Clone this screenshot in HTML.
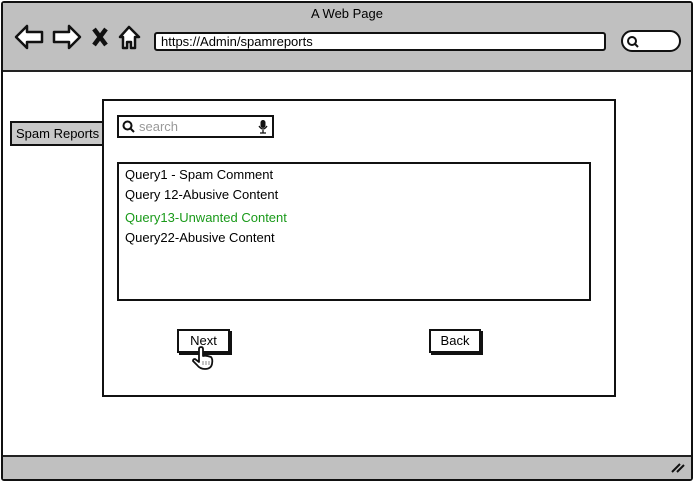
<!DOCTYPE html>
<html><head><style>
*{margin:0;padding:0;box-sizing:border-box}
body{width:694px;height:482px;background:#fff;font-family:"Liberation Sans",sans-serif;position:relative;overflow:hidden}
.a{position:absolute}
.b{border:2px solid #111}
</style></head><body>
<div class="a b" style="left:1px;top:1px;width:692px;height:480px;border-radius:3px"></div>
<div class="a" style="left:3px;top:3px;width:688px;height:69px;background:#c0c0c0;border-bottom:2px solid #222"></div>
<div class="a" style="left:0;top:6px;width:694px;text-align:center;font-size:13px">A Web Page</div>
<svg class="a" style="left:14px;top:22px" width="130" height="30" viewBox="0 0 130 30" fill="#fff" stroke="#111" stroke-width="2.5" stroke-linejoin="round">
<path d="M2 15 L13 4 L13 10 L28 10 L28 20 L13 20 L13 26 Z"/>
<path d="M66 15 L55 4 L55 10 L40 10 L40 20 L55 20 L55 26 Z"/>
<path d="M80 7 L92 23 M92 7 L80 23" stroke-width="4.5"/>
<path d="M106 15 L115 5 L125 15 L121 15 L121 26 L117 26 L117 20 L113 20 L113 26 L109 26 L109 15 Z"/>
</svg>
<div class="a b" style="left:154px;top:32px;width:452px;height:19px;background:#fff;border-radius:3px;font-size:13px;padding-left:5px;line-height:15px">https://Admin/spamreports</div>
<div class="a b" style="left:621px;top:30px;width:60px;height:22px;background:#fff;border-radius:11px"></div>
<svg class="a" style="left:626px;top:35px" width="14" height="14"><circle cx="6" cy="6" r="4" fill="none" stroke="#111" stroke-width="2"/><path d="M9 9 L12 12" stroke="#111" stroke-width="2"/></svg>
<div class="a" style="left:3px;top:455px;width:688px;height:24px;background:#c0c0c0;border-top:2px solid #222"></div>
<svg class="a" style="left:670px;top:460px" width="16" height="14"><path d="M2 12 L10 4 M7 12 L14 5" stroke="#111" stroke-width="2"/></svg>
<div class="a b" style="left:10px;top:121px;width:94px;height:25px;background:#c8c8c8;font-size:13px;padding:3px 0 0 4px">Spam Reports</div>
<div class="a b" style="left:102px;top:99px;width:514px;height:298px;background:#fff"></div>
<div class="a b" style="left:117px;top:115px;width:157px;height:23px;background:#fff;font-size:13px;color:#999;padding:2px 0 0 20px">search</div>
<svg class="a" style="left:122px;top:120px" width="14" height="14"><circle cx="5.5" cy="5.5" r="4" fill="none" stroke="#111" stroke-width="2"/><path d="M8.5 8.5 L12 12" stroke="#111" stroke-width="2"/></svg>
<svg class="a" style="left:258px;top:119px" width="10" height="15"><rect x="2.5" y="1" width="5" height="8" rx="2.5" fill="#111"/><path d="M1 7 Q5 13 9 7 M5 11 V14 M2 14 H8" stroke="#111" fill="none" stroke-width="1.3"/></svg>
<div class="a b" style="left:117px;top:162px;width:474px;height:139px;background:#fff;font-size:13px;padding:1px 0 0 6px;line-height:20px">
<div>Query1 - Spam Comment</div><div>Query 12-Abusive Content</div><div style="color:#1a9a1a;margin-top:3px">Query13-Unwanted Content</div><div>Query22-Abusive Content</div></div>
<div class="a b" style="left:177px;top:329px;width:53px;height:24px;background:#fff;font-size:13px;text-align:center;line-height:20px;box-shadow:2px 2px 0 #111">Next</div>
<div class="a b" style="left:429px;top:329px;width:52px;height:24px;background:#fff;font-size:13px;text-align:center;line-height:20px;box-shadow:2px 2px 0 #111">Back</div>
<svg class="a" style="left:191px;top:346px" width="24" height="26" viewBox="0 0 24 26"><path d="M8 3 Q8 1 10 1 Q12 1 12 3 L12 10 Q15 9 20 11 Q22 13 21 18 Q20 23 14 23 Q9 23 6 19 L2 15 Q2 13 4 13 L8 16 Z" fill="#fff" stroke="#111" stroke-width="1.8" stroke-linejoin="round"/><path d="M12 15 V19 M15 15 V19 M18 15 V19" stroke="#888" stroke-width="1"/></svg>
</body></html>
